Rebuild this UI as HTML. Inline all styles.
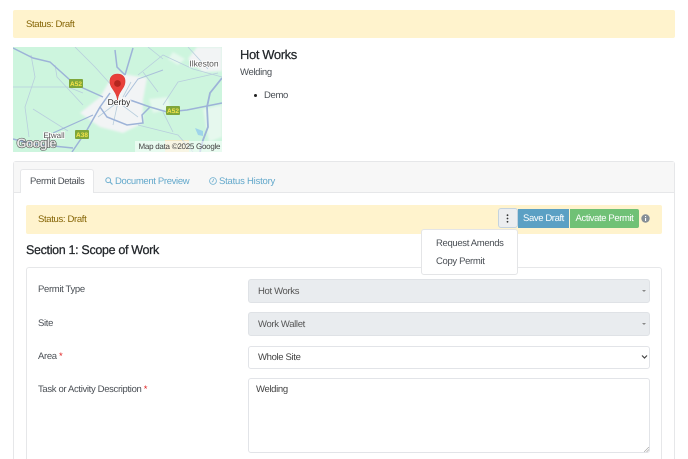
<!DOCTYPE html>
<html><head><meta charset="utf-8">
<style>
html,body{margin:0;padding:0;background:#fff;width:688px;height:459px;overflow:hidden;}
#w{position:absolute;left:0;top:0;width:688px;height:459px;overflow:hidden;font-family:"Liberation Sans",sans-serif;font-size:9.5px;letter-spacing:-.34px;color:#4a4f55;text-rendering:geometricPrecision;filter:blur(.3px);background:#fff;}
.a{position:absolute;white-space:nowrap;}
.t{line-height:12px;}
.alert{background:#fff3cd;border-radius:2px;}
.sel{background:#e9ecef;border:1px solid #dfe2e6;border-radius:3px;box-sizing:border-box;}
.w{background:#fff;border:1px solid #e2e4e8;border-radius:3px;box-sizing:border-box;}
.req{color:#e02020;}
.c{position:absolute;width:0;height:0;border-left:2.500px solid transparent;border-right:2.500px solid transparent;border-top:2.500px solid #888;}
</style></head><body><div id="w">
<div class="a alert" style="left:13px;top:10px;width:662px;height:28px"></div>
<div class="a t" style="left:26px;top:18.500px;color:#856404">Status: Draft</div>

<svg class="a" style="left:13px;top:47px;letter-spacing:0" width="209" height="105" viewBox="0 0 209 105">
<defs><filter id="b" x="0" y="0" width="100%" height="100%"><feGaussianBlur stdDeviation=".35"/></filter>
<filter id="b2" x="-5%" y="-5%" width="110%" height="110%"><feGaussianBlur stdDeviation="1.100"/></filter></defs>
<rect width="209" height="105" fill="#cdf5de"/>
<g fill="#f2f4f5" filter="url(#b2)">
<path d="M104 26 L134 31 L130 53 L130 76 L110 86 L87 80 L67 66 L87 50 L97 33Z"/>
<path d="M184 0 L209 0 L209 24 L190 25 L175 12Z"/>
<path d="M136 52 L155 50 L158 62 L140 66Z" fill="#e6f8ee"/>
<path d="M160 5 L172 12 L165 18 L155 12Z" fill="#e6f8ee"/>
<path d="M190 62 L209 58 L209 90 L196 95Z" fill="#e6f8ee"/>
</g>
<g filter="url(#b)">
<rect x="152" y="93" width="24" height="12" fill="#f0e9c4"/>
<path d="M182 81 L190 84 L190 89 L185 88Z" fill="#9fd4ea"/>
<g fill="none" stroke="#b8cedd" stroke-width=".8">
<path d="M0 40 H55 L70 46"/><path d="M18 8 L22 30 L12 60 L16 90"/><path d="M42 18 L44 30 L70 58"/>
<path d="M62 0 L82 20 L100 40"/><path d="M125 28 L150 8 L180 22 L209 30"/><path d="M150 58 L165 35 L205 26"/>
<path d="M125 78 L165 88 L180 105"/><path d="M130 25 L145 45"/><path d="M150 65 L160 85"/><path d="M20 62 L55 84"/>
<path d="M175 0 L195 22"/><path d="M135 0 L150 12"/>
<path d="M105 55 L100 78 M105 55 L125 70 M105 55 L85 70 M118 35 L110 50"/>
</g>
<g fill="none" stroke="#9db3d8" stroke-width="1.500">
<path d="M0 1 L20 11 L37 15 L57 33 L70 41 L90 50"/>
<path d="M102 3 L104 20 L112 28"/>
<path d="M120 1 L112 28"/>
<path d="M59 105 L74 83 L87 60 L97 46"/>
<path d="M0 92 L20 97 L60 101"/>
<path d="M40 86 L69 73 L80 68" stroke-width="1.200"/>
<path d="M87 60 L94 70 L114 78 L130 76 L129 68 L137 60"/>
<path d="M117 53 L137 60 L154 65 L174 63 L209 56"/>
<path d="M209 31 L197 46 L194 60 L195 80 L190 93 L187 105" stroke-width="1.800"/>
<path d="M150 23 L125 32 L112 50" stroke-width="1" stroke="#aac0da"/>
</g>
</g>
<rect x="56" y="32" width="14" height="9" rx="1" fill="#7fa63a"/>
<rect x="153" y="59" width="14" height="9" rx="1" fill="#7fa63a"/>
<rect x="62" y="83" width="14" height="9" rx="1" fill="#7fa63a"/>
<g font-family="Liberation Sans,sans-serif" font-size="6.500" font-weight="bold" fill="#f4e34a" text-anchor="middle">
<text x="63" y="39">A52</text><text x="160" y="66">A52</text><text x="69" y="90">A38</text></g>
<text x="191" y="19.500" font-family="Liberation Sans,sans-serif" font-size="8.500" fill="#555" text-anchor="middle" stroke="#fff" stroke-width="1.500" paint-order="stroke">Ilkeston</text>
<text x="106" y="58" font-family="Liberation Sans,sans-serif" font-size="8.500" fill="#222" text-anchor="middle" stroke="#fff" stroke-width="1.500" paint-order="stroke">Derby</text>
<text x="41" y="91" font-family="Liberation Sans,sans-serif" font-size="8" fill="#555" text-anchor="middle" stroke="#fff" stroke-width="1.500" paint-order="stroke">Etwall</text>
<path d="M104.500 27 C95 27 96 37 99 41 C101.500 45 103.500 47 104.500 53 C105.500 47 107.500 45 110 41 C113 37 114 27 104.500 27Z" fill="#e8403a" stroke="#d8332c" stroke-width=".5"/>
<circle cx="104.500" cy="36.500" r="3.400" fill="#b3261f"/>
<text x="3.500" y="100.500" font-family="Liberation Sans,sans-serif" font-size="13" font-weight="bold" fill="#e6e6e6" stroke="#444" stroke-width="1" paint-order="stroke" textLength="40">Google</text>
<rect x="122" y="94" width="87" height="11" fill="#fff" fill-opacity=".55"/>
<text x="125.500" y="102" font-family="Liberation Sans,sans-serif" font-size="8" fill="#444" textLength="82">Map data ©2025 Google</text>
</svg>

<div class="a" style="left:240px;top:46.500px;font-size:13px;line-height:16px;font-weight:500;color:#212529;letter-spacing:-.4px;-webkit-text-stroke:.2px #212529">Hot Works</div>
<div class="a t" style="left:240px;top:67px">Welding</div>
<div class="a" style="left:254px;top:94px;width:3px;height:3px;border-radius:50%;background:#222"></div>
<div class="a t" style="left:264px;top:90px">Demo</div>

<!-- card -->
<div class="a" style="left:13px;top:161px;width:662px;height:310px;box-sizing:border-box;border:1px solid #e6e7e9;border-radius:3px"></div>
<div class="a" style="left:14px;top:162px;width:660px;height:30px;background:#f7f7f7;border-bottom:1px solid #e6e7e9;box-sizing:content-box"></div>
<div class="a" style="left:20px;top:169px;width:74px;height:24px;box-sizing:border-box;background:#fff;border:1px solid #e6e7e9;border-bottom:none;border-radius:3px 3px 0 0"></div>
<div class="a t" style="left:30px;top:175.500px">Permit Details</div>
<svg class="a" style="left:105px;top:177px" width="8" height="8" viewBox="0 0 8 8"><circle cx="3.200" cy="3.200" r="2.400" fill="none" stroke="#6fb0d0" stroke-width="1"/><path d="M5 5 L7.500 7.500" stroke="#6fb0d0" stroke-width="1.200"/></svg>
<div class="a t" style="left:115px;top:175.500px;color:#62a8cb">Document Preview</div>
<svg class="a" style="left:209px;top:177px" width="8" height="8" viewBox="0 0 8 8"><circle cx="4" cy="4" r="3.400" fill="none" stroke="#6fb0d0" stroke-width=".8"/><path d="M4.500 2 L4 4.300 L2.800 5.200" fill="none" stroke="#6fb0d0" stroke-width=".8"/></svg>
<div class="a t" style="left:219px;top:175.500px;color:#62a8cb;letter-spacing:-.22px">Status History</div>

<div class="a alert" style="left:26px;top:205px;width:636px;height:28.500px"></div>
<div class="a t" style="left:38px;top:213.500px;color:#856404">Status: Draft</div>
<div class="a" style="left:498px;top:208px;width:20px;height:20px;box-sizing:border-box;background:#eceef0;border:1.500px solid #c4d3df;border-radius:3px"></div>
<svg class="a" style="left:506px;top:214px" width="3" height="9" viewBox="0 0 3 9"><circle cx="1.500" cy="1.200" r=".9" fill="#333"/><circle cx="1.500" cy="4.500" r=".9" fill="#333"/><circle cx="1.500" cy="7.800" r=".9" fill="#333"/></svg>
<div class="a t" style="left:518px;top:209px;width:51px;height:19px;line-height:19.500px;text-align:center;background:#5ba0c4;color:#fff;letter-spacing:-.4px">Save Draft</div>
<div class="a t" style="left:570px;top:209px;width:69px;height:19px;line-height:19.500px;text-align:center;background:#70c176;color:#fff;border-radius:0 2px 2px 0;letter-spacing:-.4px">Activate Permit</div>
<svg class="a" style="left:641px;top:214px" width="9" height="9" viewBox="0 0 9 9"><circle cx="4.500" cy="4.500" r="4.200" fill="#868e96"/><rect x="4" y="4" width="1.100" height="3" fill="#fff"/><rect x="4" y="2" width="1.100" height="1.100" fill="#fff"/></svg>

<div class="a" style="left:26px;top:242px;font-size:12.500px;line-height:16px;font-weight:500;color:#212529;letter-spacing:-.33px;-webkit-text-stroke:.25px #212529">Section 1: Scope of Work</div>

<div class="a" style="left:26px;top:266.500px;width:636px;height:210px;box-sizing:border-box;border:1px solid #e6e7e9;border-radius:3px"></div>
<div class="a t" style="left:38px;top:284px">Permit Type</div>
<div class="a sel" style="left:248px;top:279px;width:402px;height:24px"></div>
<div class="a t" style="left:258px;top:285.500px;color:#555">Hot Works</div>
<div class="c" style="left:641.500px;top:290px"></div>
<div class="a t" style="left:38px;top:317.500px">Site</div>
<div class="a sel" style="left:248px;top:312px;width:402px;height:24px"></div>
<div class="a t" style="left:258px;top:318.500px;color:#555">Work Wallet</div>
<div class="c" style="left:641.500px;top:323px"></div>
<div class="a t" style="left:38px;top:351px">Area <span class="req">*</span></div>
<div class="a w" style="left:248px;top:346px;width:402px;height:23px"></div>
<div class="a t" style="left:258px;top:351.500px;color:#444">Whole Site</div>
<svg class="a" style="left:641px;top:354px" width="7" height="6" viewBox="0 0 7 6"><path d="M1 1.500 L3.500 4 L6 1.500" fill="none" stroke="#444" stroke-width="1.200"/></svg>
<div class="a t" style="left:38px;top:383.500px">Task or Activity Description <span class="req">*</span></div>
<div class="a w" style="left:248px;top:378px;width:402px;height:75px"></div>
<div class="a t" style="left:256px;top:383.500px;color:#444">Welding</div>
<svg class="a" style="left:644px;top:447px" width="5" height="5" viewBox="0 0 5 5"><path d="M0 5 L5 0 M2.500 5 L5 2.500" stroke="#999" stroke-width=".6"/></svg>

<div class="a" style="left:421px;top:229px;width:97px;height:46px;box-sizing:border-box;background:#fff;border:1px solid #e4e5e7;border-radius:3px"></div>
<div class="a t" style="left:436px;top:238px">Request Amends</div>
<div class="a t" style="left:436px;top:256px">Copy Permit</div>
</div></body></html>
